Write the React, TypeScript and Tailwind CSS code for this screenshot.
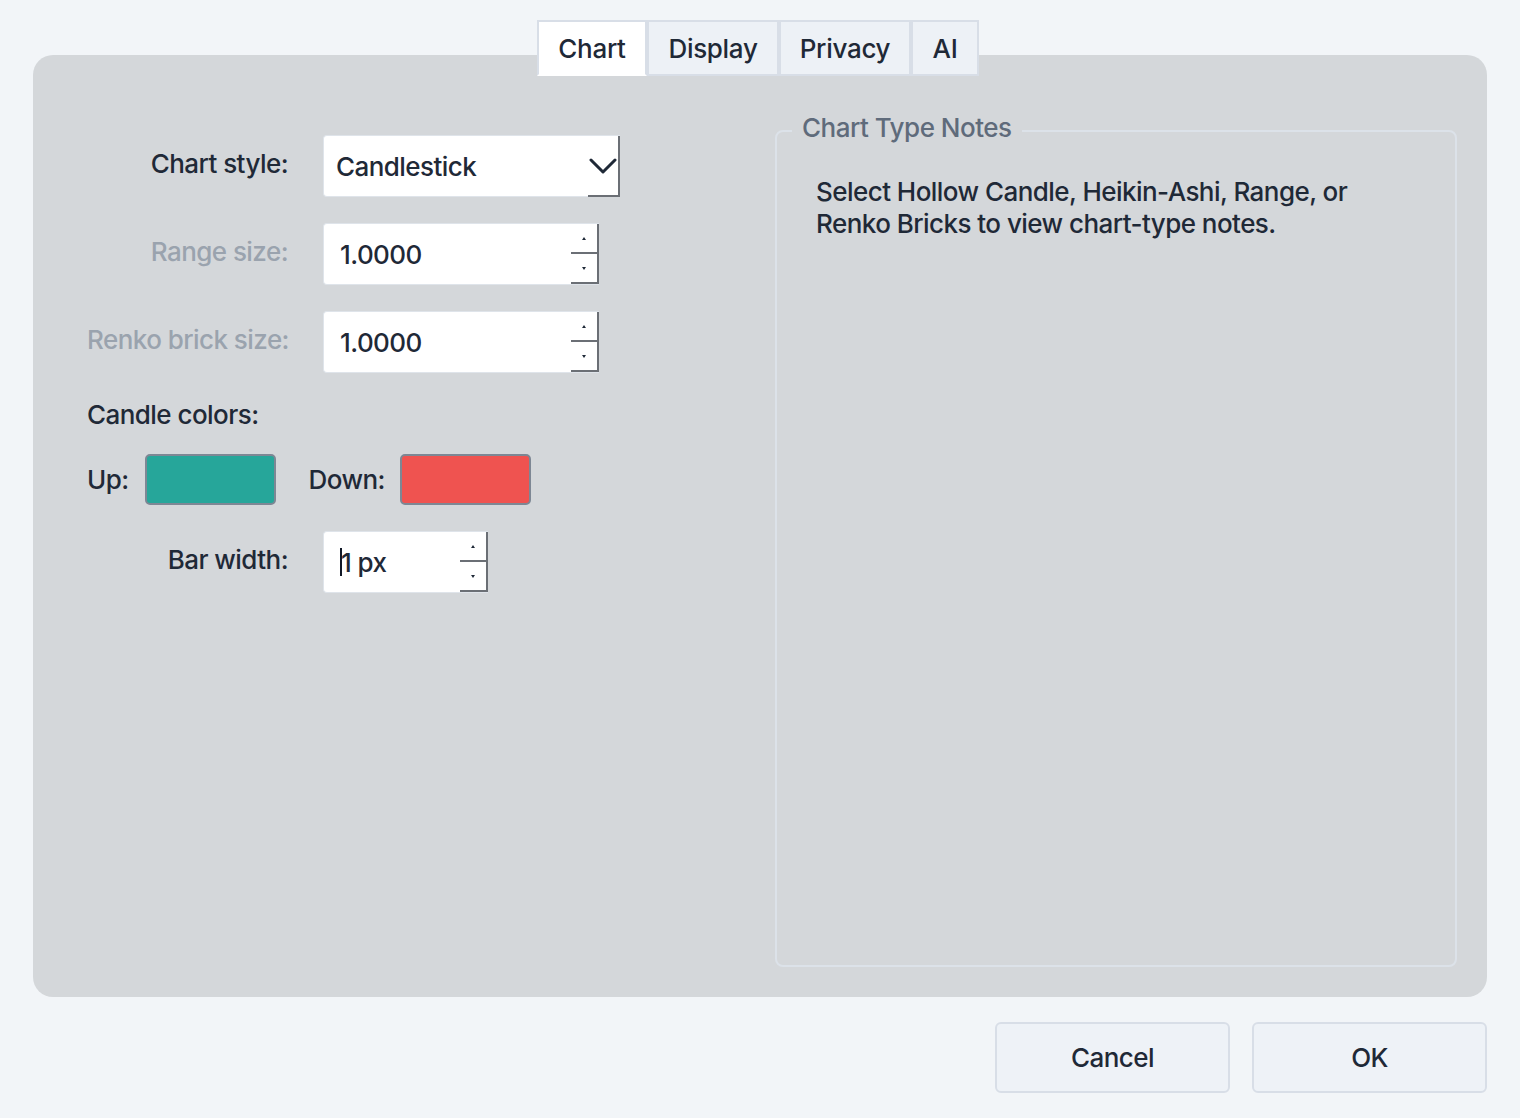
import { useState } from 'react'

const tabs = ['Chart', 'Display', 'Privacy', 'AI']
const tabWidths: Record<string, string> = { Chart: 'w-[110px]', Display: 'w-[132px]', Privacy: 'w-[132px]', AI: 'w-[68px]' }

function SpinBox({ value, width, caret }: { value: string; width: string; caret?: boolean }) {
  return (
    <div className={`${width} h-[62px] flex bg-white rounded-l-[4px] border border-[#dfe4ea] border-r-0`}>
      <div className="flex-1 flex items-center pl-[16px] text-[26px] text-[#1f2937]">
        {caret && <span className="w-[2px] h-[28px] bg-[#111827] -mr-[1px]" />}
        {value}
      </div>
      <div className="w-[28px] flex flex-col">
        <div className="flex-1 flex items-center justify-center border-r-2 border-b-2 border-[#6b6f75]">
          <span className="w-0 h-0 border-x-[2px] border-x-transparent border-b-[3px] border-b-[#1f2937]" />
        </div>
        <div className="flex-1 flex items-center justify-center border-r-2 border-b-2 border-[#6b6f75]">
          <span className="w-0 h-0 border-x-[2px] border-x-transparent border-t-[3px] border-t-[#1f2937]" />
        </div>
      </div>
    </div>
  )
}

export default function App() {
  const [active, setActive] = useState('Chart')

  return (
    <div className="w-[1520px] h-[1118px] bg-[#f2f5f8] flex flex-col px-[33px] pt-[20px] font-['Inter',sans-serif] font-medium tracking-[-0.55px] text-[#1f2937]">
      {/* TABS */}
      <div className="flex justify-center relative z-10 pr-[4px]">
        {tabs.map(t => (
          <button
            key={t}
            onClick={() => setActive(t)}
            className={`${tabWidths[t]} h-[56px] border-2 border-[#d8dee7] text-[26px] text-[#1f2937] tracking-[-0.3px] flex items-center justify-center ${active === t ? 'bg-white border-b-white' : 'bg-[#edf1f6]'}`}
          >
            {t}
          </button>
        ))}
      </div>

      {/* PANEL */}
      <div className="-mt-[21px] h-[942px] bg-[#d4d7da] rounded-[20px] flex pl-[54px] pr-[30px] pb-[30px]">
        <div className="w-[688px] pt-[80px] flex flex-col">
          <div className="grid grid-cols-[201px_auto] gap-x-[35px] gap-y-[26px] items-center justify-start">
            <span className="text-right text-[26px] whitespace-nowrap mb-[6px]">Chart style:</span>
            <div className="w-[297px] h-[62px] flex bg-white rounded-l-[4px] border border-[#dfe4ea] border-r-0">
              <div className="flex-1 flex items-center pl-[12px] text-[26px]">Candlestick</div>
              <div className="w-[32px] flex items-center justify-center border-r-2 border-b-2 border-[#6b6f75] -mb-[1px]">
                <svg width="28" height="16" viewBox="0 0 28 16" fill="none">
                  <path d="M2 2 L14 14 L26 2" stroke="#1f2937" strokeWidth="3" strokeLinecap="round" strokeLinejoin="round" />
                </svg>
              </div>
            </div>

            <span className="text-right text-[26px] text-[#9aa3ae] whitespace-nowrap mb-[6px]">Range size:</span>
            <SpinBox value="1.0000" width="w-[276px]" />

            <span className="text-right text-[26px] text-[#9aa3ae] whitespace-nowrap mb-[6px]">Renko brick size:</span>
            <SpinBox value="1.0000" width="w-[276px]" />

            <span className="col-span-2 text-[26px] leading-[32px] whitespace-nowrap">Candle colors:</span>

            <div className="col-span-2 flex items-center h-[51px] -mt-[3px]">
              <span className="text-[26px]">Up:</span>
              <div className="ml-[16px] w-[131px] h-[51px] rounded-[5px] border-2 border-[#7d8794] bg-[#26a69a]" />
              <span className="ml-[33px] text-[26px]">Down:</span>
              <div className="ml-[15px] w-[131px] h-[51px] rounded-[5px] border-2 border-[#7d8794] bg-[#ef5350]" />
            </div>

            <span className="text-right text-[26px] whitespace-nowrap mb-[6px]">Bar width:</span>
            <SpinBox value="1 px" width="w-[165px]" caret />
          </div>
        </div>

        {/* CHART TYPE NOTES */}
        <div className="flex-1 mt-[75px] relative border-2 border-[#dce2e9] rounded-[8px] px-[39px] pt-[44px]">
          <span className="absolute -top-[24px] left-[15px] px-[10px] bg-[#d4d7da] text-[26px] text-[#5f6b7b] tracking-[-0.5px]">
            Chart Type Notes
          </span>
          <p className="text-[26px] leading-[32px] text-[#1f2937] tracking-[-0.55px] w-[560px]">
            Select Hollow Candle, Heikin-Ashi, Range, or Renko Bricks to view chart-type notes.
          </p>
        </div>
      </div>

      {/* FOOTER BUTTONS */}
      <div className="flex justify-end gap-[22px] mt-[25px]">
        <button className="w-[235px] h-[71px] rounded-[6px] border-2 border-[#d8dee7] bg-[#eef2f7] text-[26px] text-[#1f2937]">Cancel</button>
        <button className="w-[235px] h-[71px] rounded-[6px] border-2 border-[#d8dee7] bg-[#eef2f7] text-[26px] text-[#1f2937]">OK</button>
      </div>
    </div>
  )
}
